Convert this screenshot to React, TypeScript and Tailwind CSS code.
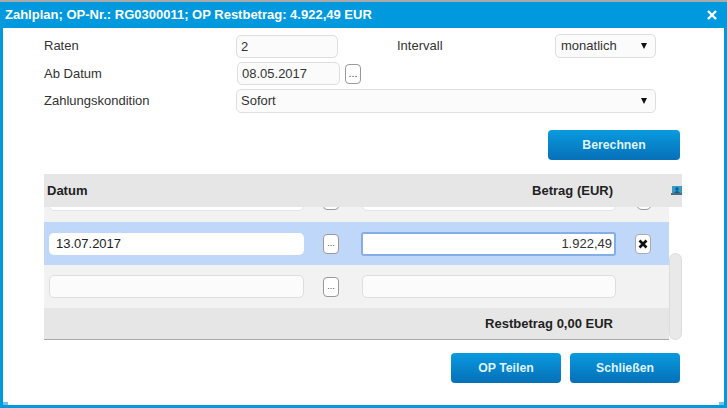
const field =
  'h-full w-full rounded-[5px] border border-[#dedede] bg-[#fbfbfb] px-[4px] text-[13px] text-[#333] outline-none';

function Dots({ className = '', large = false }: { className?: string; large?: boolean }) {
  return (
    <button
      className={`flex h-[20px] w-[16px] shrink-0 items-center justify-center rounded-[4px] border border-[#999] bg-white leading-none text-[#444] ${large ? 'text-[11px]' : 'text-[9px]'} ${className}`}
    >
      ...
    </button>
  );
}

function Arrow() {
  return (
    <svg width="6" height="6" viewBox="0 0 6 6" className="shrink-0">
      <path d="M0 0h6L3 6z" fill="#111" />
    </svg>
  );
}

function ActionButton({ label, width }: { label: string; width: string }) {
  return (
    <button
      className={`${width} h-[30px] rounded-[4px] bg-gradient-to-b from-[#0a9ade] to-[#0670b8] text-[12.25px] font-bold text-[#dff3ff]`}
    >
      {label}
    </button>
  );
}

export default function App() {
  return (
    <div className="relative h-[408px] w-[727px] overflow-hidden bg-white font-['Liberation_Sans',Arial,sans-serif] text-[13px] text-[#333]">
      <div className="h-[2px] bg-[#a9a9a9]" />
      <div className="flex h-[406px] flex-col border-x-[3px] border-b-[3px] border-[#0099dd]">
        {/* Title bar */}
        <div className="flex h-[26px] shrink-0 items-center justify-between bg-[#0099dd] pl-[2px] pr-[7px] text-[13px] font-bold text-white">
          <span>Zahlplan; OP-Nr.: RG0300011; OP Restbetrag: 4.922,49 EUR</span>
          <svg width="10" height="10" viewBox="0 0 10 10">
            <path d="M1 1l8 8M9 1l-8 8" stroke="#fff" strokeWidth="2.4" />
          </svg>
        </div>

        {/* Form */}
        <div className="flex items-center pt-[6px]">
          <span className="ml-[41px] w-[192px]">Raten</span>
          <div className="h-[23px] w-[102px]">
            <input readOnly value="2" className={field} />
          </div>
          <span className="ml-[59px] w-[158px]">Intervall</span>
          <div className="flex h-[24px] w-[101px] items-center justify-between rounded-[5px] border border-[#dedede] bg-[#fbfbfb] pl-[5px] pr-[8px]">
            monatlich
            <Arrow />
          </div>
        </div>
        <div className="mt-[4px] flex items-center">
          <span className="ml-[41px] w-[193px]">Ab Datum</span>
          <div className="h-[23px] w-[103px]">
            <input readOnly value="08.05.2017" className={field} />
          </div>
          <Dots large className="ml-[5px]" />
        </div>
        <div className="mt-[4px] flex items-center">
          <span className="ml-[41px] w-[192px]">Zahlungskondition</span>
          <div className="flex h-[24px] w-[420px] items-center justify-between rounded-[5px] border border-[#dedede] bg-[#fbfbfb] pl-[4px] pr-[8px]">
            Sofort
            <Arrow />
          </div>
        </div>
        <div className="mt-[17px] flex justify-end pr-[44px]">
          <ActionButton label="Berechnen" width="w-[132px]" />
        </div>

        {/* Table */}
        <div className="ml-[41px] mt-[14px] w-[638px]">
          <div className="flex h-[33px] items-center bg-[#e6e6e6] font-bold text-[#222]">
            <span className="ml-[3px]">Datum</span>
            <span className="ml-auto mr-[58px]">Betrag (EUR)</span>
            <svg width="11" height="9" viewBox="0 0 11 9" className="mb-[1px]">
              <rect x="1" y="0" width="10" height="7" fill="#3a9bc9" />
              <circle cx="6" cy="3" r="1.7" fill="#0d5f86" />
              <path d="M3 7q3-4 6 0z" fill="#0d5f86" />
              <rect x="0" y="7" width="11" height="2" fill="#56687a" />
            </svg>
          </div>
          <div className="flex">
            <div className="w-[625px]">
              {/* Row scrolled under the header */}
              <div className="relative h-[15px] overflow-hidden bg-[#f2f2f2]">
                <div className="absolute bottom-[11px] left-[5px] h-[20px] w-[255px] rounded-[5px] border border-[#e4e4e4] bg-white" />
                <div className="absolute bottom-[12px] left-[279px] h-[20px] w-[16px] rounded-[4px] border border-[#999] bg-white" />
                <div className="absolute bottom-[11px] left-[318px] h-[20px] w-[254px] rounded-[5px] border border-[#e4e4e4] bg-white" />
                <div className="absolute bottom-[12px] left-[592px] h-[20px] w-[16px] rounded-[6px] border border-[#999] bg-white" />
              </div>
              {/* Selected row */}
              <div className="flex h-[43px] items-center bg-[#bfd8fa]">
                <div className="ml-[5px] h-[22px] w-[255px]">
                  <input readOnly value="13.07.2017" className="h-full w-full rounded-[5px] bg-white px-[7px] text-[13px] text-[#222] outline-none" />
                </div>
                <Dots className="ml-[19px]" />
                <div className="ml-[22px] h-[24px] w-[255px]">
                  <input readOnly value="1.922,49" className="h-full w-full rounded-[3px] border-2 border-[#85aee8] bg-white px-[2px] text-right text-[13px] text-[#333] outline-none" />
                </div>
                <button className="ml-[19px] flex h-[20px] w-[16px] items-center justify-center rounded-[4px] border border-[#aaa] bg-white">
                  <svg width="10" height="10" viewBox="0 0 10 10">
                    <path d="M1.5 1.5l7 7M8.5 1.5l-7 7" stroke="#111" strokeWidth="2.6" />
                  </svg>
                </button>
              </div>
              {/* Empty row */}
              <div className="flex h-[43px] items-center bg-[#f2f2f2]">
                <div className="ml-[5px] h-[23px] w-[255px]">
                  <input readOnly className={field} />
                </div>
                <Dots className="ml-[19px]" />
                <div className="ml-[23px] h-[23px] w-[254px]">
                  <input readOnly className={field} />
                </div>
              </div>
              <div className="flex h-[32px] items-center justify-end border-b border-[#aaa] bg-[#e6e6e6] pr-[56px] font-bold text-[#222]">
                Restbetrag 0,00 EUR
              </div>
            </div>
            {/* Scrollbar */}
            <div className="w-[13px] pt-[46px]">
              <div className="h-[87px] rounded-full border border-[#dcdcdc] bg-[#e9e9e9]" />
            </div>
          </div>
        </div>

        <div className="mt-[13px] flex justify-end gap-[9px] pr-[44px]">
          <ActionButton label="OP Teilen" width="w-[110px]" />
          <ActionButton label="Schließen" width="w-[110px]" />
        </div>
      </div>
      {/* Resize corners */}
      <div className="absolute bottom-[3px] left-[3px] h-[3px] w-[5px] bg-[#6cc4ee]" />
      <div className="absolute bottom-[3px] right-[3px] h-[3px] w-[5px] bg-[#6cc4ee]" />
    </div>
  );
}
